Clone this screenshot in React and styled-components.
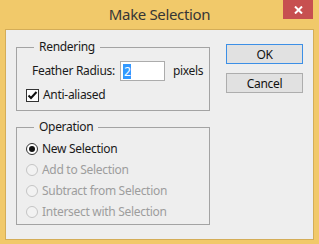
import React from "react";
import styled, { createGlobalStyle } from "styled-components";

const Global = createGlobalStyle`
  html, body { margin: 0; padding: 0; background: #f0c869; }
  body { font-family: "Noto Sans", "Open Sans", sans-serif; }
`;

const Frame = styled.div`
  width: 319px;
  height: 244px;
  background: #f1c96a;
  display: flex;
  flex-direction: column;
  box-sizing: border-box;
  padding: 0 5px 4px 5px;
`;

const TitleBar = styled.div`
  height: 29px;
  display: grid;
  grid-template-columns: 1fr auto 1fr;
  align-items: start;
  flex: none;
`;

const Title = styled.div`
  grid-column: 2;
  font-family: "Noto Sans", sans-serif;
  font-size: 15px;
  color: #363636;
  line-height: 20px;
  padding-top: 4px;
  letter-spacing: -0.35px;
`;

const CloseButton = styled.div`
  grid-column: 3;
  justify-self: end;
  width: 30px;
  height: 19px;
  margin-right: 1px;
  background: #c75050;
  display: flex;
  align-items: center;
  justify-content: center;
`;

const Client = styled.div`
  flex: 1;
  background: #eeeeee;
  border: 1px solid #d4ad58;
  display: flex;
  gap: 16px;
  padding: 9px 10px 0 10px;
  font-size: 12px;
  letter-spacing: -0.3px;
  color: #1a1a1a;
`;

const LeftCol = styled.div`
  width: 194px;
  display: flex;
  flex-direction: column;
  gap: 8px;
`;

const Group = styled.fieldset`
  margin: 0;
  border: 1px solid #a3a3a3;
  padding: ${(p) => p.$pad};
  display: flex;
  flex-direction: column;
  gap: ${(p) => p.$gap || "0px"};
  min-width: 0;
`;

const Legend = styled.legend`
  margin-left: 17px;
  padding: 0 5px;
  line-height: 16px;
  font-size: 12px;
  color: #1a1a1a;
`;

const FieldRow = styled.div`
  display: flex;
  align-items: center;
  height: 20px;
  padding-left: 15px;
`;

const Label = styled.span`
  line-height: 16px;
  white-space: nowrap;
`;

const Input = styled.div`
  width: 41px;
  height: 18px;
  margin-left: 5px;
  background: #ffffff;
  border: 1px solid #acacac;
  display: flex;
  align-items: center;
  padding-left: 2px;
  box-sizing: content-box;
`;

const Selected = styled.span`
  background: #3399ff;
  color: #fff;
  line-height: 15px;
  padding: 0 1px;
`;

const Unit = styled.span`
  margin-left: 8px;
  line-height: 16px;
`;

const CheckRow = styled.div`
  display: flex;
  align-items: center;
  gap: 4px;
  height: 16px;
  padding-left: 9px;
`;

const RadioRow = styled.div`
  display: flex;
  align-items: center;
  gap: 4px;
  height: 21px;
  padding-left: 9px;
  color: ${(p) => (p.$disabled ? "#9d9d9d" : "#1a1a1a")};
`;

const RightCol = styled.div`
  width: 77px;
  display: flex;
  flex-direction: column;
  gap: 9px;
  padding-top: 5px;
`;

const Button = styled.div`
  height: 20px;
  box-sizing: border-box;
  border: 1px solid ${(p) => (p.$default ? "#3c8fe6" : "#adadad")};
  background: #e1e1e1;
  display: flex;
  align-items: center;
  justify-content: center;
  font-size: 12px;
  color: #111;
`;

const Check = () => (
  <svg width="13" height="13" viewBox="0 0 13 13">
    <rect x="0.5" y="0.5" width="12" height="12" fill="#fff" stroke="#333" />
    <path d="M2.5 6.5 L5 9 L10.5 3" fill="none" stroke="#111" strokeWidth="2" />
  </svg>
);

const Radio = ({ on, disabled }) => (
  <svg width="12" height="12" viewBox="0 0 12 12">
    <circle
      cx="6"
      cy="6"
      r="5.5"
      fill={disabled ? "#f2f2f2" : "#fff"}
      stroke={disabled ? "#c4c4c4" : "#333"}
    />
    {on && <circle cx="6" cy="6" r="3" fill="#111" />}
  </svg>
);

const ops = [
  { label: "New Selection", on: true },
  { label: "Add to Selection", disabled: true },
  { label: "Subtract from Selection", disabled: true },
  { label: "Intersect with Selection", disabled: true },
];

export default function App() {
  return (
    <>
      <Global />
      <Frame>
        <TitleBar>
          <Title>Make Selection</Title>
          <CloseButton>
            <svg width="9" height="8" viewBox="0 0 9 8">
              <path d="M1 0.5 L8 7.5 M8 0.5 L1 7.5" stroke="#fff" strokeWidth="2" />
            </svg>
          </CloseButton>
        </TitleBar>
        <Client>
          <LeftCol>
            <Group $pad="6px 0 7px 0" $gap="6px">
              <Legend>Rendering</Legend>
              <FieldRow>
                <Label>Feather Radius:</Label>
                <Input>
                  <Selected>2</Selected>
                </Input>
                <Unit>pixels</Unit>
              </FieldRow>
              <CheckRow>
                <Check />
                <Label>Anti-aliased</Label>
              </CheckRow>
            </Group>
            <Group $pad="3px 0 2px 0">
              <Legend>Operation</Legend>
              {ops.map((o) => (
                <RadioRow key={o.label} $disabled={o.disabled}>
                  <Radio on={o.on} disabled={o.disabled} />
                  <Label>{o.label}</Label>
                </RadioRow>
              ))}
            </Group>
          </LeftCol>
          <RightCol>
            <Button $default>OK</Button>
            <Button>Cancel</Button>
          </RightCol>
        </Client>
      </Frame>
    </>
  );
}
